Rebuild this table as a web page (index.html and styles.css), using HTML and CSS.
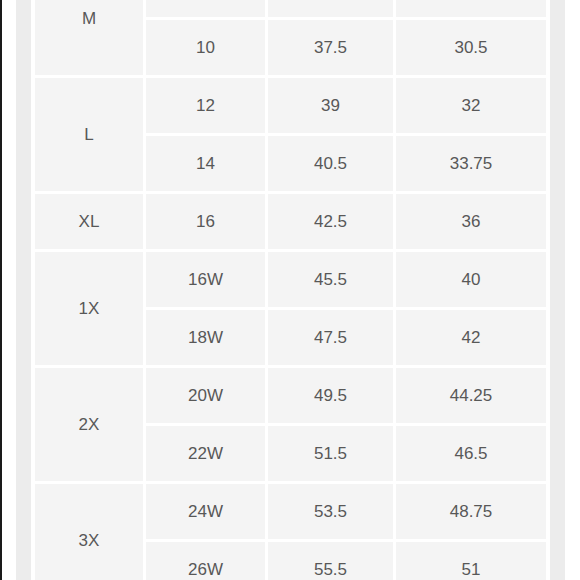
FILE: index.html
```html
<!DOCTYPE html>
<html>
<head>
<meta charset="utf-8">
<link rel="stylesheet" href="styles.css">
</head>
<body>
<div class="page">
  <div class="edge"></div>
  <div class="gap-w"></div>
  <div class="strip"></div>
  <div class="gap-s"></div>
  <div class="table">
    <div class="c size r2">M</div>
    <div class="c"></div><div class="c"></div><div class="c"></div>
    <div class="c">10</div><div class="c">37.5</div><div class="c">30.5</div>

    <div class="c size r2">L</div>
    <div class="c">12</div><div class="c">39</div><div class="c">32</div>
    <div class="c">14</div><div class="c">40.5</div><div class="c">33.75</div>

    <div class="c size">XL</div>
    <div class="c">16</div><div class="c">42.5</div><div class="c">36</div>

    <div class="c size r2">1X</div>
    <div class="c">16W</div><div class="c">45.5</div><div class="c">40</div>
    <div class="c">18W</div><div class="c">47.5</div><div class="c">42</div>

    <div class="c size r2">2X</div>
    <div class="c">20W</div><div class="c">49.5</div><div class="c">44.25</div>
    <div class="c">22W</div><div class="c">51.5</div><div class="c">46.5</div>

    <div class="c size r2">3X</div>
    <div class="c">24W</div><div class="c">53.5</div><div class="c">48.75</div>
    <div class="c">26W</div><div class="c">55.5</div><div class="c">51</div>
  </div>
  <div class="gap-s"></div>
  <div class="strip"></div>
</div>
</body>
</html>
```
FILE: styles.css
```css
html, body {
  margin: 0;
  padding: 0;
  background: #ffffff;
  height: 580px;
  overflow: hidden;
}
.page {
  display: flex;
  align-items: stretch;
  height: 580px;
  overflow: hidden;
}
.edge {
  width: 2px;
  background: #1a1a1a;
  flex: none;
}
.gap-w {
  width: 14px;
  flex: none;
}
.strip {
  width: 15px;
  background: #ececec;
  flex: none;
}
.gap-s {
  width: 4px;
  flex: none;
}
.table {
  flex: none;
  width: 511px;
  display: grid;
  grid-template-columns: 108px 119px 125px 150px;
  grid-auto-rows: 55px;
  column-gap: 3px;
  row-gap: 3px;
  margin-top: -38px;
  align-self: flex-start;
}
.c {
  background: #f4f4f4;
  display: flex;
  align-items: center;
  justify-content: center;
  font-family: "Liberation Sans", Arial, sans-serif;
  font-size: 17px;
  color: #585858;
}
.size {
  grid-column: 1;
}
.r2 {
  grid-row: span 2;
}
```
